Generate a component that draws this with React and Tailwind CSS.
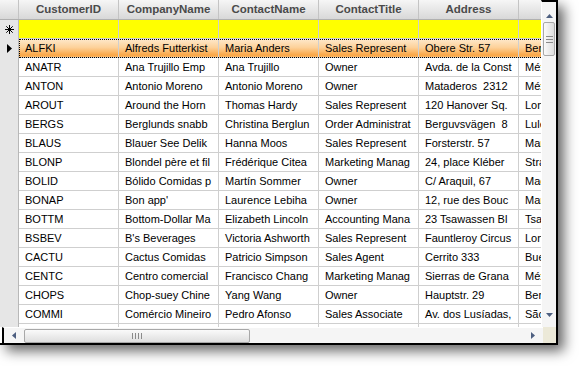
import React from 'react';

const columns = ['CustomerID', 'CompanyName', 'ContactName', 'ContactTitle', 'Address', 'City'];

// text as the grid shows it, trimmed to whole characters inside each cell
const rows = [
  ['ALFKI', 'Alfreds Futterkist', 'Maria Anders', 'Sales Represent', 'Obere Str. 57', 'Berlin'],
  ['ANATR', 'Ana Trujillo Emp', 'Ana Trujillo', 'Owner', 'Avda. de la Const', 'México D.F.'],
  ['ANTON', 'Antonio Moreno', 'Antonio Moreno', 'Owner', 'Mataderos  2312', 'México D.F.'],
  ['AROUT', 'Around the Horn', 'Thomas Hardy', 'Sales Represent', '120 Hanover Sq.', 'London'],
  ['BERGS', 'Berglunds snabb', 'Christina Berglun', 'Order Administrat', 'Berguvsvägen  8', 'Luleå'],
  ['BLAUS', 'Blauer See Delik', 'Hanna Moos', 'Sales Represent', 'Forsterstr. 57', 'Mannheim'],
  ['BLONP', 'Blondel père et fil', 'Frédérique Citea', 'Marketing Manag', '24, place Kléber', 'Strasbourg'],
  ['BOLID', 'Bólido Comidas p', 'Martín Sommer', 'Owner', 'C/ Araquil, 67', 'Madrid'],
  ['BONAP', "Bon app'", 'Laurence Lebiha', 'Owner', '12, rue des Bouc', 'Marseille'],
  ['BOTTM', 'Bottom-Dollar Ma', 'Elizabeth Lincoln', 'Accounting Mana', '23 Tsawassen Bl', 'Tsawassen'],
  ['BSBEV', "B's Beverages", 'Victoria Ashworth', 'Sales Represent', 'Fauntleroy Circus', 'London'],
  ['CACTU', 'Cactus Comidas', 'Patricio Simpson', 'Sales Agent', 'Cerrito 333', 'Buenos Aires'],
  ['CENTC', 'Centro comercial', 'Francisco Chang', 'Marketing Manag', 'Sierras de Grana', 'México D.F.'],
  ['CHOPS', 'Chop-suey Chine', 'Yang Wang', 'Owner', 'Hauptstr. 29', 'Bern'],
  ['COMMI', 'Comércio Mineiro', 'Pedro Afonso', 'Sales Associate', 'Av. dos Lusíadas,', 'São Paulo'],
  ['', '', '', '', '', ''],
];

const Arrow = ({ dir }) => {
  const pts = {
    up: '0,4 3.5,0 7,4',
    down: '0,0 7,0 3.5,4',
    left: '4,0 4,7 0,3.5',
    right: '0,0 0,7 4,3.5',
  }[dir];
  const w = dir === 'up' || dir === 'down' ? 7 : 4;
  const h = dir === 'up' || dir === 'down' ? 4 : 7;
  return (
    <svg width={w} height={h} viewBox={`0 0 ${w} ${h}`}>
      <polygon points={pts} fill="#4d5f80" />
    </svg>
  );
};

const App = () => {
  return (
    <div className="w-[579px] h-[366px] bg-white overflow-hidden" style={{ fontFamily: '"Liberation Sans", Arial, sans-serif' }}>
      <div className="w-[558px] h-[345px] flex flex-col border-r-2 border-b-2 border-black shadow-[6px_6px_12px_rgba(0,0,0,0.6)] bg-white">
        <div className="flex h-[327px]">
          {/* grid */}
          <div className="w-[541px] h-[327px] overflow-hidden bg-white">
            <div className="flex h-[20px] bg-gradient-to-b from-[#f6f6f6] to-[#d8d8d8] border-b border-[#b0b0b0]">
              <div className="w-[19px] shrink-0 border-r border-[#c4c4c4]" />
              {columns.map((c) => (
                <div key={c} className="w-[100px] shrink-0 border-r border-[#c4c4c4] flex items-center justify-center pt-[1px] text-[11.5px] font-bold text-[#4a4a4a] overflow-hidden whitespace-nowrap">
                  {c}
                </div>
              ))}
            </div>

            {/* new row */}
            <div className="flex h-[19px]">
              <div className="w-[19px] shrink-0 bg-[#e6e6e6] border-r border-[#b8b8b8] flex items-center justify-center">
                <svg width="9" height="9" viewBox="0 0 9 9">
                  <path d="M4.5 0V9M0 4.5H9M1.3 1.3L7.7 7.7M7.7 1.3L1.3 7.7" stroke="#000" strokeWidth="1" />
                </svg>
              </div>
              {columns.map((c) => (
                <div key={c} className="w-[100px] shrink-0 bg-[#ffff00] border-r border-b border-[#cfcfcf]" />
              ))}
            </div>

            {rows.map((r, i) => {
              const selected = i === 0;
              return (
                <div key={i} className="flex h-[19px]">
                  <div className="w-[19px] shrink-0 bg-[#e6e6e6] border-r border-[#b8b8b8] flex items-center pl-[7px]">
                    {selected && (
                      <svg width="5" height="9" viewBox="0 0 5 9">
                        <polygon points="0,0 5,4.5 0,9" fill="#000" />
                      </svg>
                    )}
                  </div>
                  <div className={selected ? 'flex outline outline-1 outline-dotted outline-black -outline-offset-1 bg-[linear-gradient(to_bottom,#fee9cc,#fdd199_45%,#f9a646_85%,#fbc07a)]' : 'flex'}>
                    {r.map((v, j) => (
                      <div key={j} className="w-[100px] shrink-0 border-r border-b border-[#cfcfcf] pl-[6px] pr-[1px] text-[11px] text-black whitespace-pre overflow-hidden flex items-center">
                        {v}
                      </div>
                    ))}
                  </div>
                </div>
              );
            })}
          </div>

          {/* vertical scrollbar */}
          <div className="w-[15px] h-[327px] flex flex-col border-t-2 border-black bg-[#f5f5f5] border-l border-l-white">
            <div className="h-[20px] flex items-end justify-center pb-[4px]">
              <Arrow dir="up" />
            </div>
            <div className="h-[34px] mx-[1px] rounded-[2px] border border-[#a8a8a8] bg-gradient-to-r from-[#fafafa] to-[#dedede] flex flex-col items-center justify-center gap-[2px]">
              <div className="w-[7px] h-px bg-[#8a8a8a]" />
              <div className="w-[7px] h-px bg-[#8a8a8a]" />
              <div className="w-[7px] h-px bg-[#8a8a8a]" />
            </div>
            <div className="flex-1" />
            <div className="h-[20px] flex items-center justify-center pb-[4px]">
              <Arrow dir="down" />
            </div>
          </div>
        </div>

        {/* horizontal scrollbar */}
        <div className="flex h-[16px]">
          <div className="w-[541px] ml-[2px] flex items-center border-l-2 border-black bg-[#f5f5f5] border-t border-t-white">
            <div className="w-[20px] flex items-center justify-center">
              <Arrow dir="left" />
            </div>
            <div className="w-[226px] h-[14px] rounded-[2px] border border-[#a8a8a8] bg-gradient-to-b from-[#fafafa] to-[#dedede] flex items-center justify-center gap-[2px]">
              <div className="w-px h-[6px] bg-[#8a8a8a]" />
              <div className="w-px h-[6px] bg-[#8a8a8a]" />
              <div className="w-px h-[6px] bg-[#8a8a8a]" />
              <div className="w-px h-[6px] bg-[#8a8a8a]" />
            </div>
            <div className="flex-1" />
            <div className="w-[16px] flex items-center justify-center mr-[2px]">
              <Arrow dir="right" />
            </div>
          </div>
          <div className="flex-1 bg-[#ece9d8]" />
        </div>
      </div>
    </div>
  );
};

export default App;
